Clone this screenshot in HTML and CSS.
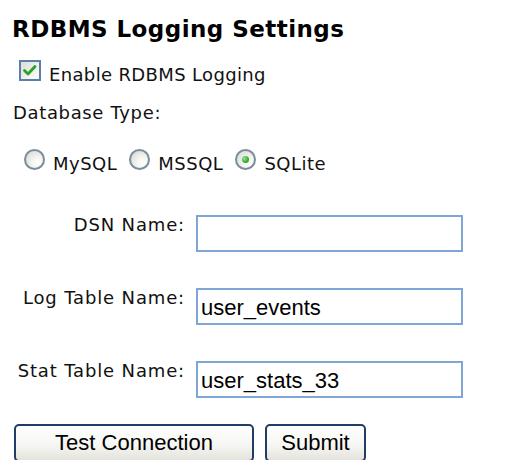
FILE: index.html
```html
<!DOCTYPE html>
<html lang="en">
<head>
<meta charset="utf-8">
<title>RDBMS Logging Settings</title>
<link rel="stylesheet" href="styles.css">
</head>
<body>
<form class="settings">
  <h1 class="title">RDBMS Logging Settings</h1>

  <label class="check-row">
    <span class="checkbox">
      <svg viewBox="0 0 22 21" width="22" height="21">
        <defs>
          <linearGradient id="cbFill" x1="0" y1="0" x2="1" y2="1">
            <stop offset="0" stop-color="#dcdcd4"/>
            <stop offset="1" stop-color="#ffffff"/>
          </linearGradient>
        </defs>
        <rect x="1" y="1" width="20" height="19" fill="url(#cbFill)" stroke="#5a7fa8" stroke-width="2"/>
        <path d="M5.5 10.5 L9 14 L16 6.5" fill="none" stroke="#25a425" stroke-width="2.8" stroke-linecap="round" stroke-linejoin="round"/>
      </svg>
    </span>
    <span class="check-text">Enable RDBMS Logging</span>
  </label>

  <p class="field-caption">Database Type:</p>

  <div class="radio-row">
    <label class="radio-opt">
      <span class="radio"></span>
      <span class="radio-text">MySQL</span>
    </label>
    <label class="radio-opt">
      <span class="radio"></span>
      <span class="radio-text">MSSQL</span>
    </label>
    <label class="radio-opt">
      <span class="radio radio-on"></span>
      <span class="radio-text">SQLite</span>
    </label>
  </div>

  <div class="fields">
    <label class="field-label" for="dsn">DSN Name:</label>
    <input class="text-input" id="dsn" type="text" value="">

    <label class="field-label" for="logtable">Log Table Name:</label>
    <input class="text-input" id="logtable" type="text" value="user_events">

    <label class="field-label" for="stattable">Stat Table Name:</label>
    <input class="text-input" id="stattable" type="text" value="user_stats_33">
  </div>

  <div class="actions">
    <button class="btn btn-test" type="button">Test Connection</button>
    <button class="btn btn-submit" type="submit">Submit</button>
  </div>
</form>
</body>
</html>
```

FILE: styles.css
```css
html, body {
  margin: 0;
  padding: 0;
  background: #ffffff;
}

body {
  font-family: "DejaVu Sans", Verdana, sans-serif;
  font-size: 18px;
  letter-spacing: 0.5px;
  color: #111111;
}

.settings {
  padding: 15px 0 0 12px;
}

.title {
  margin: 0;
  font-family: "DejaVu Sans", Verdana, sans-serif;
  font-weight: bold;
  font-size: 23px;
  letter-spacing: 0.45px;
  line-height: 28px;
  color: #000000;
}

/* checkbox row */
.check-row {
  display: flex;
  align-items: flex-start;
  margin: 17px 0 0 7px;
}

.checkbox {
  display: block;
  width: 22px;
  height: 21px;
}

.checkbox svg {
  display: block;
}

.check-text {
  padding: 4px 0 0 8px;
  line-height: 22px;
  letter-spacing: 0.35px;
}

.field-caption {
  margin: 16px 0 0 1px;
  line-height: 22px;
  letter-spacing: 0.65px;
}

/* radio buttons */
.radio-row {
  display: flex;
  margin: 25px 0 0 12px;
  gap: 12px;
}

.radio-opt {
  display: flex;
  align-items: flex-start;
}

.radio {
  display: block;
  box-sizing: border-box;
  width: 21px;
  height: 21px;
  border: 2px solid #7a8d9c;
  border-radius: 50%;
  background: radial-gradient(circle at 70% 70%, #ffffff 0%, #f4f4f0 35%, #d6d6ce 100%);
  position: relative;
}

.radio-on::after {
  content: "";
  position: absolute;
  left: 5px;
  top: 5px;
  width: 7px;
  height: 7px;
  border-radius: 50%;
  background: radial-gradient(circle at 35% 35%, #9be39b 0%, #2fae2f 60%, #1f8f1f 100%);
}

.radio-text {
  padding: 4px 0 0 8px;
  line-height: 22px;
}

/* text fields */
.fields {
  display: grid;
  grid-template-columns: 173px 267px;
  column-gap: 11px;
  row-gap: 36px;
  margin-top: 40px;
  align-items: start;
}

.field-label {
  text-align: right;
  line-height: 20px;
  letter-spacing: 0.85px;
}

.text-input {
  box-sizing: border-box;
  width: 267px;
  height: 37px;
  margin: 0;
  padding: 2px 3px 0;
  border: 2px solid #80a6d8;
  border-radius: 0;
  background: #ffffff;
  font-family: "Liberation Sans", Arial, sans-serif;
  font-size: 22px;
  letter-spacing: 0;
  color: #000000;
  outline: none;
}

/* buttons */
.actions {
  display: flex;
  gap: 11px;
  margin: 26px 0 0 2px;
}

.btn {
  box-sizing: border-box;
  height: 38px;
  margin: 0;
  padding: 0;
  border: 2px solid #1f3d66;
  border-radius: 5px;
  background: linear-gradient(to bottom, #ffffff 0%, #f6f6f3 55%, #e4e3dc 100%);
  font-family: "Liberation Sans", Arial, sans-serif;
  font-size: 22px;
  letter-spacing: 0;
  color: #000000;
  line-height: 1;
}

.btn-test {
  width: 240px;
}

.btn-submit {
  width: 101px;
}
```
